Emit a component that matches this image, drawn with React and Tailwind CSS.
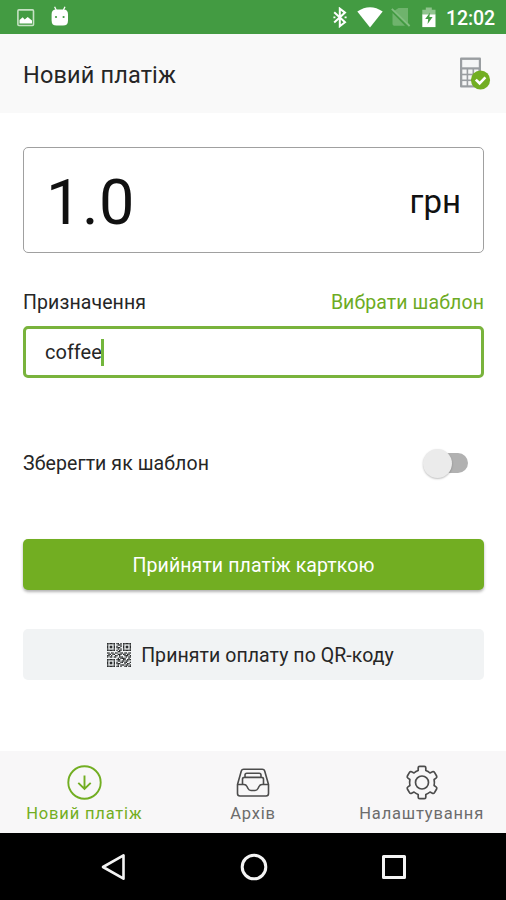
import React from "react";

// Module map of the QR pictogram, one character per module.
const QR = [
  "111111011010111111",
  "100001001110100001",
  "101101010010101101",
  "101101011100101101",
  "100001001010100001",
  "111111010110111111",
  "000000001100000000",
  "110110110011011011",
  "011011001110110110",
  "110100110100011101",
  "101101100111001011",
  "000000001011110010",
  "111111011100110111",
  "100001001101101100",
  "101101010011011001",
  "101101011100010110",
  "100001001011101101",
  "111111011010011011",
];

function QrIcon() {
  return (
    <svg width="24" height="24" viewBox="0 0 18 18" fill="#2b2d2e">
      {QR.flatMap((row, y) =>
        [...row].map((c, x) =>
          c === "1" ? <rect key={`${x}-${y}`} x={x} y={y} width="1" height="1" /> : null
        )
      )}
    </svg>
  );
}

function StatusBar() {
  return (
    <div className="flex h-[34px] shrink-0 items-center bg-[#439b42] pl-[17px] pr-[11px] text-white">
      <svg className="mt-px" width="18" height="18" viewBox="0 0 18 18">
        <rect x="0.9" y="0.9" width="15.6" height="15.6" rx="1" fill="none" stroke="#c6e2c4" strokeWidth="1.6" />
        <path d="M2.5 14.5V11l3.2-2.8 2 2.3 3-2.6 4.3 3.7v2.9z" fill="#fff" />
      </svg>
      <svg className="mb-[1px] ml-4" width="18" height="21" viewBox="0 0 18 21">
        <path d="M3.6 0.8L5.2 4M14 0.8L12.4 4" stroke="#fff" strokeWidth="1.3" />
        <path d="M.6 8.2Q.6 3.4 5 3.4h7.6q4.4 0 4.4 4.8v6.2q0 5.2-5 5.2H5.6q-5 0-5-5.2z" fill="#fff" />
        <circle cx="5" cy="11" r="1.1" fill="#439b42" />
        <circle cx="12.6" cy="11" r="1.1" fill="#439b42" />
      </svg>
      <div className="flex-1" />
      <svg width="14" height="21" viewBox="0 0 14 21">
        <path d="M1.2 5.2L12 15.2 6.8 19.2V1.6L12 5.6 1.2 15.6" fill="none" stroke="#fff" strokeWidth="2" />
        <path d="M.4 10.4h2M11.6 10.4h2" stroke="#fff" strokeWidth="1.8" />
      </svg>
      <svg className="ml-[10px]" width="26" height="21" viewBox="0 0 26 21">
        <path d="M.3 4.6Q13-4.2 25.7 4.6L13 20.4z" fill="#fff" />
      </svg>
      <svg className="ml-2" width="20" height="20" viewBox="0 0 20 20">
        <path d="M7.5 1H17v15.5L3.4 3.8zM1.5 6L14 18.8H3.2q-1.7 0-1.7-1.7z" fill="#6fb36d" />
        <path d="M.8 1.8L18.6 19" stroke="#83be81" strokeWidth="1.8" />
      </svg>
      <svg className="ml-[11px]" width="14" height="21" viewBox="0 0 14 21">
        <path d="M3.8.6h6v2.2h3.7V8H.3V2.8h3.5z" fill="#8fc48d" />
        <path d="M.3 7.5h13.2v12.6H.3z" fill="#fff" />
        <path d="M8 5.4L3.2 12h3L5.6 17l5-7H7.4z" fill="#439b42" />
      </svg>
      <div className="ml-[10px] mt-[3px] text-[19.5px] font-medium leading-6 tracking-[-0.1px]">12:02</div>
    </div>
  );
}

function CalculatorIcon() {
  return (
    <svg width="31" height="33" viewBox="0 0 31 33">
      <rect x="0" y="0.5" width="21" height="30" rx="1" fill="#9a9ea1" />
      <rect x="2.2" y="2.9" width="16.6" height="7.4" fill="#f5f6f6" />
      {[12.5, 18.3, 24.1].map((y) =>
        [2.3, 8.2, 14.1].map((x) => (
          <rect key={`${x}-${y}`} x={x} y={y} width="4.3" height="4.2" fill="#f5f6f6" />
        ))
      )}
      <circle cx="20.5" cy="23" r="9.6" fill="#72ae22" />
      <path d="M15.8 22.6l3.8 3.7 5.8-6" fill="none" stroke="#fff" strokeWidth="2.6" />
    </svg>
  );
}

function Tab({ icon, label, className }) {
  return (
    <div className={`flex flex-1 flex-col items-center ${className}`}>
      {icon}
      <div className="mt-[3px] whitespace-nowrap text-[16.5px] leading-5 tracking-[0.82px]">{label}</div>
    </div>
  );
}

export default function App() {
  return (
    <div className="flex h-[900px] w-[506px] flex-col overflow-hidden bg-white font-['Roboto',sans-serif] text-[#262626]">
      <StatusBar />
      <header className="flex h-[79px] shrink-0 items-center justify-between bg-[#f9f9f9] pl-[23px] pr-[15px]">
        <h1 className="mt-[3px] text-[23.5px] leading-8 tracking-[0.15px]">Новий платіж</h1>
        <CalculatorIcon />
      </header>

      <main className="flex flex-1 flex-col px-[23px] pt-[34px]">
        <div className="-mr-px flex h-[106px] items-center justify-between rounded-[5px] border-[1.5px] border-[#a0a0a0] pl-[22px] pr-[22px] text-[#111]">
          <span className="mt-[5px] text-[63px] leading-none tracking-[0.5px]">1.0</span>
          <span className="mt-[3px] text-[33px] leading-none">грн</span>
        </div>

        <div className="-mr-px mt-[38px] flex h-6 items-center justify-between text-[19.5px] tracking-[0.1px]">
          <span>Призначення</span>
          <span className="text-[#6dab24]">Вибрати шаблон</span>
        </div>
        <div className="-mr-px mt-[11px] flex h-[52px] items-center rounded-[5px] border-[3px] border-[#79b33c] pl-[19px] text-[20px]">
          <span>coffee</span>
          <span className="-ml-px h-[27px] w-[3px] bg-[#73b63c]" />
        </div>

        <div className="mt-[67px] flex h-9 items-center justify-between pr-[15px]">
          <span className="pt-px text-[19.5px] tracking-[0.08px]">Зберегти як шаблон</span>
          <span className="flex h-[30px] w-[45px] items-center">
            <span className="z-10 h-[29px] w-[29px] shrink-0 rounded-full bg-[#ebebeb] shadow-[0_1px_2px_rgba(0,0,0,0.25)]" />
            <span className="-ml-4 h-5 w-8 shrink-0 rounded-full bg-[#b1b1b1]" />
          </span>
        </div>

        <button className="-mr-px mt-[58px] flex h-[51px] w-[461px] items-center justify-center rounded-[5px] bg-[#72ae22] pt-0.5 text-[19.5px] tracking-[0.1px] text-white shadow-[0_2px_3px_rgba(0,0,0,0.3)]">
          Прийняти платіж карткою
        </button>
        <button className="-mr-px mt-[39px] flex h-[51px] w-[461px] items-center justify-center gap-[10px] rounded-[5px] bg-[#f1f3f4] pr-[6px] text-[19.5px] tracking-[0.07px]">
          <QrIcon />
          <span className="pt-0.5">Приняти оплату по QR-коду</span>
        </button>
      </main>

      <nav className="flex h-[82px] shrink-0 bg-[#f8f7f8] pt-[14px] text-[#6c6c6c]">
        <Tab
          className="text-[#72ae22]"
          label="Новий платіж"
          icon={
            <svg width="36" height="36" viewBox="0 0 36 36" fill="none" stroke="#72ae22" strokeWidth="1.9">
              <circle cx="18.5" cy="17.5" r="16.2" />
              <path d="M18.5 10.5v13.4M12.3 17.8L18.5 24l6.2-6.2" />
            </svg>
          }
        />
        <Tab
          className=""
          label="Архів"
          icon={
            <svg width="36" height="36" viewBox="0 0 36 36" fill="none" stroke="#4c4c4c" strokeWidth="1.6" strokeLinejoin="round">
              <path d="M2.500 19.500L6.300 6q.5-1.800 2.400-1.800h18.600q1.900 0 2.400 1.800l3.800 13.500v9q0 2.500-2.500 2.500H5q-2.500 0-2.500-2.500z" />
              <path d="M2.500 19.500H9q2 0 3 2l1 2q1 2 3 2h4q2 0 3-2l1-2q1-2 3-2h6.500M7.500 19.500v-5.300q0-1.800 1.800-1.800h17.400q1.800 0 1.800 1.800v5.300M10 12.200V10q0-1.800 1.800-1.800h12.400Q26 8.200 26 10v2.200" />
            </svg>
          }
        />
        <Tab
          className=""
          label="Налаштування"
          icon={
            <svg width="36" height="36" viewBox="0 0 36 36" fill="none" stroke="#4c4c4c" strokeWidth="1.7" strokeLinejoin="round">
              <path d="M14.200 2.800q0-1.500 1.500-1.500h4.600q1.500 0 1.500 1.500v2.700q2.400.8 4.200 2.500l2.400-1.200q1.300-.7 2.100.6l2.100 3.600q.7 1.300-.5 2.100l-2 1.400q.6 3 0 6l2 1.400q1.200.8.5 2.100l-2.100 3.600q-.8 1.300-2.100.6L26 27q-1.800 1.700-4.200 2.500v2.700q0 1.500-1.500 1.500h-4.600q-1.500 0-1.500-1.500v-2.700Q11.800 28.700 10 27l-2.400 1.200q-1.300.7-2.100-.6L3.400 24q-.7-1.300.5-2.100l2-1.400q-.6-3 0-6l-2-1.400Q2.700 12.300 3.400 11l2.100-3.600q.8-1.300 2.100-.6L10 8q1.800-1.700 4.200-2.500z" />
              <circle cx="18" cy="17.500" r="6.500" />
            </svg>
          }
        />
      </nav>

      <footer className="flex h-[67px] shrink-0 items-center justify-between bg-black pl-[99px] pr-[99px]">
        <svg width="27" height="30" viewBox="0 0 27 30" fill="none" stroke="#f4f4f4" strokeWidth="2.6" strokeLinejoin="round">
          <path d="M4 15L24.500 3.300v23.400z" />
        </svg>
        <svg width="28" height="28" viewBox="0 0 28 28" fill="none" stroke="#f4f4f4" strokeWidth="3">
          <circle cx="14" cy="14" r="11.800" />
        </svg>
        <svg width="26" height="26" viewBox="0 0 26 26" fill="none" stroke="#f4f4f4" strokeWidth="3" strokeLinejoin="round">
          <rect x="2.500" y="2.500" width="21" height="21" />
        </svg>
      </footer>
    </div>
  );
}
